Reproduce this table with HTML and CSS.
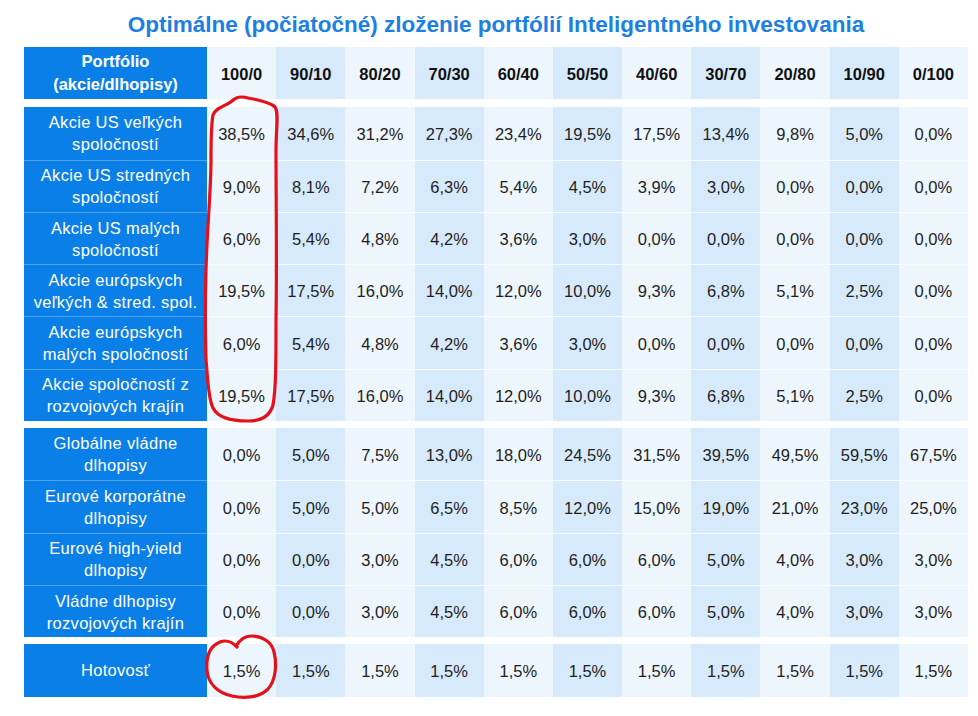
FILE: index.html
```html
<!DOCTYPE html>
<html lang="sk">
<head>
<meta charset="utf-8">
<title>Optimálne zloženie portfólií</title>
<link rel="stylesheet" href="styles.css">
</head>
<body>
<div class="page">
  <h1 class="title">Optimálne (počiatočné) zloženie portfólií Inteligentného investovania</h1>
  <div class="table">
    <div class="row head">
      <div class="lab">Portfólio<br>(akcie/dlhopisy)</div>
      <div class="c">100/0</div><div class="c">90/10</div><div class="c">80/20</div><div class="c">70/30</div><div class="c">60/40</div><div class="c">50/50</div><div class="c">40/60</div><div class="c">30/70</div><div class="c">20/80</div><div class="c">10/90</div><div class="c">0/100</div>
    </div>
    <div class="grp">
      <div class="row"><div class="lab">Akcie US veľkých<br>spoločností</div>
        <div class="c">38,5%</div><div class="c">34,6%</div><div class="c">31,2%</div><div class="c">27,3%</div><div class="c">23,4%</div><div class="c">19,5%</div><div class="c">17,5%</div><div class="c">13,4%</div><div class="c">9,8%</div><div class="c">5,0%</div><div class="c">0,0%</div></div>
      <div class="row"><div class="lab">Akcie US stredných<br>spoločností</div>
        <div class="c">9,0%</div><div class="c">8,1%</div><div class="c">7,2%</div><div class="c">6,3%</div><div class="c">5,4%</div><div class="c">4,5%</div><div class="c">3,9%</div><div class="c">3,0%</div><div class="c">0,0%</div><div class="c">0,0%</div><div class="c">0,0%</div></div>
      <div class="row"><div class="lab">Akcie US malých<br>spoločností</div>
        <div class="c">6,0%</div><div class="c">5,4%</div><div class="c">4,8%</div><div class="c">4,2%</div><div class="c">3,6%</div><div class="c">3,0%</div><div class="c">0,0%</div><div class="c">0,0%</div><div class="c">0,0%</div><div class="c">0,0%</div><div class="c">0,0%</div></div>
      <div class="row"><div class="lab">Akcie európskych<br>veľkých &amp; stred. spol.</div>
        <div class="c">19,5%</div><div class="c">17,5%</div><div class="c">16,0%</div><div class="c">14,0%</div><div class="c">12,0%</div><div class="c">10,0%</div><div class="c">9,3%</div><div class="c">6,8%</div><div class="c">5,1%</div><div class="c">2,5%</div><div class="c">0,0%</div></div>
      <div class="row"><div class="lab">Akcie európskych<br>malých spoločností</div>
        <div class="c">6,0%</div><div class="c">5,4%</div><div class="c">4,8%</div><div class="c">4,2%</div><div class="c">3,6%</div><div class="c">3,0%</div><div class="c">0,0%</div><div class="c">0,0%</div><div class="c">0,0%</div><div class="c">0,0%</div><div class="c">0,0%</div></div>
      <div class="row"><div class="lab">Akcie spoločností z<br>rozvojových krajín</div>
        <div class="c">19,5%</div><div class="c">17,5%</div><div class="c">16,0%</div><div class="c">14,0%</div><div class="c">12,0%</div><div class="c">10,0%</div><div class="c">9,3%</div><div class="c">6,8%</div><div class="c">5,1%</div><div class="c">2,5%</div><div class="c">0,0%</div></div>
    </div>
    <div class="grp">
      <div class="row"><div class="lab">Globálne vládne<br>dlhopisy</div>
        <div class="c">0,0%</div><div class="c">5,0%</div><div class="c">7,5%</div><div class="c">13,0%</div><div class="c">18,0%</div><div class="c">24,5%</div><div class="c">31,5%</div><div class="c">39,5%</div><div class="c">49,5%</div><div class="c">59,5%</div><div class="c">67,5%</div></div>
      <div class="row"><div class="lab">Eurové korporátne<br>dlhopisy</div>
        <div class="c">0,0%</div><div class="c">5,0%</div><div class="c">5,0%</div><div class="c">6,5%</div><div class="c">8,5%</div><div class="c">12,0%</div><div class="c">15,0%</div><div class="c">19,0%</div><div class="c">21,0%</div><div class="c">23,0%</div><div class="c">25,0%</div></div>
      <div class="row"><div class="lab">Eurové high-yield<br>dlhopisy</div>
        <div class="c">0,0%</div><div class="c">0,0%</div><div class="c">3,0%</div><div class="c">4,5%</div><div class="c">6,0%</div><div class="c">6,0%</div><div class="c">6,0%</div><div class="c">5,0%</div><div class="c">4,0%</div><div class="c">3,0%</div><div class="c">3,0%</div></div>
      <div class="row"><div class="lab">Vládne dlhopisy<br>rozvojových krajín</div>
        <div class="c">0,0%</div><div class="c">0,0%</div><div class="c">3,0%</div><div class="c">4,5%</div><div class="c">6,0%</div><div class="c">6,0%</div><div class="c">6,0%</div><div class="c">5,0%</div><div class="c">4,0%</div><div class="c">3,0%</div><div class="c">3,0%</div></div>
    </div>
    <div class="grp">
      <div class="row"><div class="lab">Hotovosť</div>
        <div class="c">1,5%</div><div class="c">1,5%</div><div class="c">1,5%</div><div class="c">1,5%</div><div class="c">1,5%</div><div class="c">1,5%</div><div class="c">1,5%</div><div class="c">1,5%</div><div class="c">1,5%</div><div class="c">1,5%</div><div class="c">1,5%</div></div>
    </div>
  </div>
  <svg class="marks" width="978" height="716" viewBox="0 0 978 716" aria-hidden="true">
    <path d="M213 115 C215 108 226 106 232 101 C236 97 240 96 248 98 C258 100 270 102 275 107 C279 112 276 130 276 150 C276 200 277 260 276 320 C276 360 276 390 273 405 C270 416 262 421 248 421 C232 421 218 418 213 408 C208 398 208 380 206 360 C205 330 205 300 206 270 C207 230 211 190 211 160 C211 140 211 125 213 115 Z"/>
    <path d="M236 646 C240 640 244 636 252 636 C262 636 272 642 274 652 C277 664 276 680 268 689 C260 697 246 699 232 696 C218 693 208 684 207 670 C206 656 210 646 220 642 C228 639 233 643 237 647"/>
  </svg>
</div>
</body>
</html>
```

FILE: styles.css
```css
html, body {
  margin: 0;
  padding: 0;
  background: #ffffff;
}
body {
  font-family: "Liberation Sans", Arial, sans-serif;
  color: #1e1e1e;
}
.page {
  position: relative;
  width: 978px;
  height: 716px;
  padding: 0 10px 0 24px;
  box-sizing: border-box;
}
.title {
  margin: 0;
  height: 47px;
  width: 944px;
  box-sizing: border-box;
  padding-top: 11px;
  text-align: center;
  font-size: 22.5px;
  font-weight: 700;
  line-height: 27px;
  color: #1b80e2;
  white-space: nowrap;
}
.table {
  width: 944px;
  display: flex;
  flex-direction: column;
  gap: 7px;
}
.head {
  margin-bottom: 1px;
}
.row {
  display: grid;
  grid-template-columns: 183px repeat(11, 1fr);
  height: 52.3px;
}
.lab, .c {
  display: flex;
  align-items: center;
  justify-content: center;
  text-align: center;
  box-sizing: border-box;
  font-size: 16.5px;
  line-height: 22px;
  white-space: nowrap;
}
.lab {
  background: #0b7fe8;
  color: #ffffff;
  padding: 0 2px;
  letter-spacing: 0.3px;
}
.head .lab {
  font-weight: 700;
  letter-spacing: 0;
  line-height: 23px;
}
.head .c {
  font-weight: 700;
  color: #111;
}
.c {
  background: #edf5fd;
  padding-top: 1px;
}
.c:nth-child(odd) {
  background: #d7eafb;
}
.row + .row > .lab {
  border-top: 1px solid #4fa3ef;
}
.row + .row > .c {
  border-top: 1px solid #f8fbff;
}
.marks {
  position: absolute;
  left: 0;
  top: 0;
  pointer-events: none;
}
.marks path {
  fill: none;
  stroke: #e5101a;
  stroke-width: 3.2;
  stroke-linecap: round;
  stroke-linejoin: round;
}
```
